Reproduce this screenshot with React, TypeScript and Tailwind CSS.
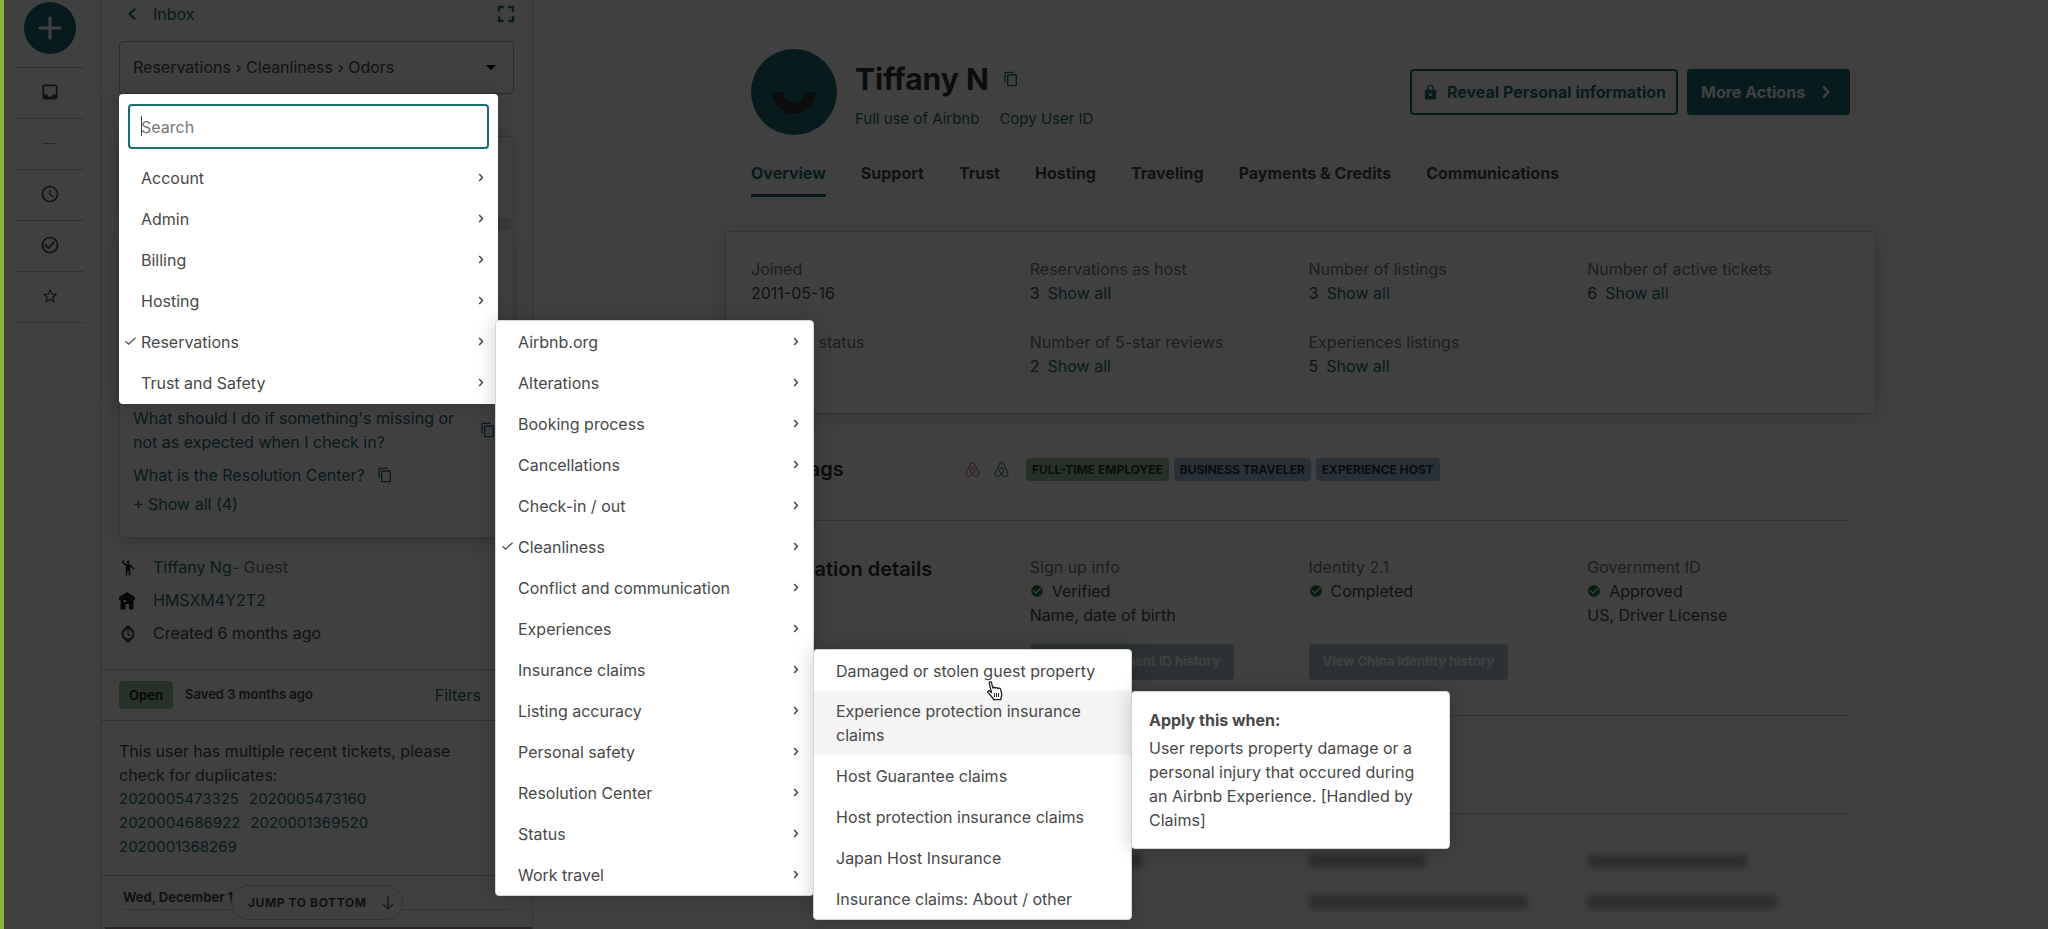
import type { ReactNode } from 'react';
import { FaAirbnb } from 'react-icons/fa';
import {
  MdAccessTime,
  MdArrowDropDown,
  MdCheckCircle,
  MdCheckCircleOutline,
  MdContentCopy,
  MdEmojiPeople,
  MdFullscreen,
  MdInbox,
  MdLock,
  MdStarBorder,
} from 'react-icons/md';

const ISSUE_AREAS = ['Account', 'Admin', 'Billing', 'Hosting', 'Reservations', 'Trust and Safety'];

const RESERVATION_ISSUES = [
  'Airbnb.org',
  'Alterations',
  'Booking process',
  'Cancellations',
  'Check-in / out',
  'Cleanliness',
  'Conflict and communication',
  'Experiences',
  'Insurance claims',
  'Listing accuracy',
  'Personal safety',
  'Resolution Center',
  'Status',
  'Work travel',
];

const INSURANCE_ISSUES = [
  'Damaged or stolen guest property',
  'Experience protection insurance claims',
  'Host Guarantee claims',
  'Host protection insurance claims',
  'Japan Host Insurance',
  'Insurance claims: About / other',
];

const TABS = ['Overview', 'Support', 'Trust', 'Hosting', 'Traveling', 'Payments & Credits', 'Communications'];

const STATS = [
  { label: 'Joined', value: '2011-05-16' },
  { label: 'Reservations as host', value: '3', link: true },
  { label: 'Number of listings', value: '3', link: true },
  { label: 'Number of active tickets', value: '6', link: true },
  { label: 'Account status', value: 'Active' },
  { label: 'Number of 5-star reviews', value: '2', link: true },
  { label: 'Experiences listings', value: '5', link: true },
];

const DUPLICATES = [
  ['2020005473325', '2020005473160'],
  ['2020004686922', '2020001369520'],
  ['2020001368269'],
];

function Chevron({ className }: { className: string }) {
  return (
    <svg className={className} viewBox="0 0 6 10" fill="none" stroke="currentColor" strokeWidth="1.7" aria-hidden="true">
      <path d="M1 1l3.6 4L1 9" />
    </svg>
  );
}

function CheckMark() {
  return (
    <svg className="absolute top-4 left-1.5 w-[11px] h-2" viewBox="0 0 11 8" fill="none" stroke="currentColor" strokeWidth="1.2" aria-hidden="true">
      <path d="M0.5 4.2l3 3L10.5 0.7" />
    </svg>
  );
}

function HouseIcon() {
  return (
    <svg className="w-4 h-[18px]" viewBox="0 0 16 18" fill="currentColor" aria-hidden="true">
      <path fillRule="evenodd" d="M8 0l8 5v3h-1.5v9.5H10V12H6.5v5.5h-5V8H0V5l4-2.5zM4.5 8v2H7V8z" />
    </svg>
  );
}

function WatchIcon() {
  return (
    <svg className="w-[18px] h-[18px]" viewBox="0 0 18 18" fill="none" stroke="currentColor" aria-hidden="true">
      <circle cx="9" cy="9" r="5.5" strokeWidth="2.2" />
      <path d="M9 5.8V9.3l2.2 1.6" strokeWidth="1.3" />
      <path d="M6.5 3.5L7.5 1h3l1 2.5zM6.5 14.500l1 2.500h3l1-2.500z" fill="currentColor" strokeWidth="0.8" />
    </svg>
  );
}

function HandPointer() {
  return (
    <svg className="absolute top-[31px] left-[172px] w-[18px] h-5 z-10" viewBox="0 0 18 20" fill="#fff" stroke="#222" strokeWidth="1.3" strokeLinejoin="round" aria-hidden="true">
      <path d="M5.5 11.5L3.3 2.6c-.5-2 1.7-2.5 2.2-.7L6.9 7.2c.3-1.3 2.2-1.3 2.6.2.4-1.2 2.2-1.1 2.6.4.5-1.1 2.2-.8 2.5.6l1 4.3c.4 2-.6 3.2-.8 5.9H7.600c-.4-2-3.500-4.400-5.500-6.900-.9-1.300.6-2.600 1.800-1.500z" />
      <path d="M8.4 12v4M10.5 12v4M12.6 12v4" strokeWidth="1" />
    </svg>
  );
}

interface MenuItemProps {
  label: string;
  checked?: boolean;
  hovered?: boolean;
  hasChildren?: boolean;
  children?: ReactNode;
}

function MenuItem({ label, checked, hovered, hasChildren, children }: MenuItemProps) {
  return (
    <li className="relative">
      <button
        type="button"
        className={`w-full min-h-[41px] flex items-center justify-between text-left pl-[22px] pr-3.5 ${hovered ? 'bg-[#f5f5f5] py-2' : ''}`}
      >
        {checked && <CheckMark />}
        <span>{label}</span>
        {hasChildren && <Chevron className="w-1.5 h-[9px]" />}
      </button>
      {children}
    </li>
  );
}

function InsuranceMenu() {
  return (
    <ul className="absolute top-0 left-full w-[319px] bg-white rounded border border-gray-300 shadow-[0_0_20px_rgba(0,0,0,0.2)]">
      {INSURANCE_ISSUES.map((label, i) => (
        <MenuItem key={label} label={label} hovered={i === 1}>
          {i === 0 && <HandPointer />}
          {i === 1 && (
            <div className="absolute top-0 left-full w-[319px] bg-white rounded border border-gray-300 px-[17px] pt-4 pb-4 shadow-[0_0_20px_rgba(0,0,0,0.2)]">
              <h3 className="font-bold leading-6 mb-1">Apply this when:</h3>
              <p className="leading-6">
                User reports property damage or a personal injury that occured during an Airbnb Experience. [Handled by Claims]
              </p>
            </div>
          )}
        </MenuItem>
      ))}
    </ul>
  );
}

function IssuePicker() {
  return (
    <div className="absolute top-full left-0 z-20 w-[379px] pb-px bg-white rounded text-[#484848] shadow-[0_0_20px_rgba(0,0,0,0.2)]">
      <div className="relative px-[9px] pt-2.5 pb-2">
        <input
          type="text"
          aria-label="Search issues"
          placeholder="Search"
          className="w-full h-[45px] rounded border-2 border-[#1c6c70] px-[11px] placeholder:text-[#767676] outline-none"
        />
        {/* text caret */}
        <span className="absolute top-[22px] left-[22px] w-px h-5 bg-gray-700" />
      </div>
      <ul>
        {ISSUE_AREAS.map(area => (
          <MenuItem key={area} label={area} checked={area === 'Reservations'} hasChildren>
            {area === 'Reservations' && (
              <ul className="absolute -top-px left-full -ml-[3px] w-[319px] bg-white rounded border border-gray-300 shadow-[0_0_20px_rgba(0,0,0,0.2)]">
                {RESERVATION_ISSUES.map(issue => (
                  <MenuItem key={issue} label={issue} checked={issue === 'Cleanliness'} hasChildren>
                    {issue === 'Insurance claims' && <InsuranceMenu />}
                  </MenuItem>
                ))}
              </ul>
            )}
          </MenuItem>
        ))}
      </ul>
    </div>
  );
}

function Rail() {
  const cell = 'w-[68px] h-[51px] pb-0.5 border-t border-[#c8c8c8] flex items-center justify-center';
  return (
    <nav className="w-[100px] shrink-0 flex flex-col items-center pt-0.5 text-[#484848]">
      <button type="button" aria-label="New ticket" className="w-[52px] h-[52px] mb-[13px] rounded-full bg-[#1c6c70] text-white flex items-center justify-center">
        <svg className="w-6 h-6" viewBox="0 0 24 24" stroke="currentColor" strokeWidth="3.2" strokeLinecap="round" aria-hidden="true">
          <path d="M12 2v20M2 12h20" />
        </svg>
      </button>
      <button type="button" aria-label="Inbox" className={cell}><MdInbox size={20} /></button>
      <div className={cell}><span className="w-3.5 h-px bg-[#999]" /></div>
      <button type="button" aria-label="Recent" className={cell}><MdAccessTime size={20} /></button>
      <button type="button" aria-label="Done" className={cell}><MdCheckCircleOutline size={20} /></button>
      <button type="button" aria-label="Starred" className={cell}><MdStarBorder size={18} /></button>
      <div className="w-[68px] border-t border-[#c8c8c8]" />
    </nav>
  );
}

function TicketPanel() {
  return (
    <section className="w-[433px] shrink-0 border-x border-[#d0d0d0] flex flex-col text-[#484848]">
      <div className="px-[18px]">
        <div className="h-[41px] pb-[14px] flex items-center justify-between text-[#1c6c70]">
          <a href="#inbox" className="flex items-center">
            <svg className="w-2.5 h-3 ml-2 mr-4" viewBox="0 0 10 12" fill="none" stroke="currentColor" strokeWidth="2.2" aria-hidden="true">
              <path d="M8 0.8L2.5 6L8 11.2" />
            </svg>
            Inbox
          </a>
          <button type="button" aria-label="Expand" className="-mr-1.5"><MdFullscreen size={28} /></button>
        </div>

        <div className="relative mb-[42px]">
          <button type="button" className="w-full h-[53px] pb-0.5 rounded border border-[#b0b0b0] pl-[13px] pr-2.5 flex items-center justify-between">
            Reservations › Cleanliness › Odors
            <MdArrowDropDown size={24} className="text-black" />
          </button>
          <IssuePicker />
        </div>

        <div className="h-[84px] mb-2 rounded border border-[#d0d0d0] shadow-[0_2px_16px_rgba(0,0,0,0.15)]" />

        <div className="h-[310px] rounded border border-[#d0d0d0] px-[13px] pb-[21px] flex flex-col justify-end text-[#1c6c70] leading-6 shadow-[0_4px_20px_rgba(0,0,0,0.2)]">
          <div className="flex items-center justify-between mb-[9px]">
            <a href="#missing" className="w-[335px]">What should I do if something's missing or not as expected when I check in?</a>
            <button type="button" aria-label="Copy link" className="mr-1"><MdContentCopy size={16} /></button>
          </div>
          <div className="flex items-center gap-3 mb-[5px]">
            <a href="#resolution">What is the Resolution Center?</a>
            <button type="button" aria-label="Copy link"><MdContentCopy size={16} /></button>
          </div>
          <a href="#all">+ Show all (4)</a>
        </div>

        <ul className="pt-[13px] pb-[19px] leading-[33px]">
          <li className="flex items-center gap-4">
            <MdEmojiPeople size={18} className="text-[#222]" />
            <span><a href="#guest" className="text-[#1c6c70]">Tiffany Ng</a><span className="text-[#767676]">- Guest</span></span>
          </li>
          <li className="flex items-center gap-4 text-[#222]">
            <span className="w-[18px] flex"><HouseIcon /></span>
            <a href="#reservation" className="text-[#1c6c70]">HMSXM4Y2T2</a>
          </li>
          <li className="flex items-center gap-4">
            <WatchIcon />
            Created 6 months ago
          </li>
        </ul>
      </div>

      <div className="h-[51px] shrink-0 border-t border-[#c8c8c8] pl-[18px] pr-[51px] flex items-center">
        <span className="h-7 px-2.5 rounded bg-[#98c8a0] text-[#222] text-[13px] leading-7 font-bold mr-3">Open</span>
        <span className="text-[13px] font-semibold">Saved 3 months ago</span>
        <a href="#filters" className="ml-auto text-[#1c6c70]">Filters</a>
      </div>

      <div className="border-y border-[#c8c8c8] pl-[18px] pr-16 pt-[18px] pb-4 leading-6">
        <p>This user has multiple recent tickets, please check for duplicates:</p>
        {DUPLICATES.map(row => (
          <p key={row[0]} className="flex gap-2.5 text-[15px] leading-6 text-[#1c6c70]">
            {row.map(id => <a key={id} href={`#${id}`}>{id}</a>)}
          </p>
        ))}
      </div>

      <div className="relative mx-[22px] pt-2.5 pb-[17px]">
        <h4 className="border-b border-[#c8c8c8] pb-px text-[13px] leading-[22px] font-bold">Wed, December 16</h4>
        <button type="button" className="absolute top-[9px] left-[108px] h-[35px] w-[172px] rounded-full border border-[#c8c8c8] bg-white pl-4 pr-2 flex items-center justify-between text-xs font-bold tracking-wider">
          JUMP TO BOTTOM
          <svg className="w-3 h-3.5 text-[#767676]" viewBox="0 0 12 14" fill="none" stroke="currentColor" strokeWidth="1.5" aria-hidden="true">
            <path d="M6 0v13M1 8l5 5 5-5" />
          </svg>
        </button>
      </div>
      <div className="ml-1 border-t-2 border-[#a09090]" />
    </section>
  );
}

function Status({ label, status, detail }: { label: string; status: string; detail?: string }) {
  return (
    <div className="leading-6">
      <p className="text-[#767676]">{label}</p>
      <p className="flex items-center gap-2">
        <MdCheckCircle size={14} className="text-[#1f7a3a]" />
        {status}
      </p>
      <p className="h-6">{detail}</p>
    </div>
  );
}

function Profile() {
  const historyButton = 'mt-[17px] justify-self-start h-9 px-3.5 rounded bg-[#b0c8d0] text-white text-[13px] font-bold';
  const redacted = 'h-3.5 bg-[#b4b4b4] blur-[3px]';
  return (
    <main className="flex-1 min-w-0 pl-48 pr-[172px] pt-[49px] text-[#484848]">
      <header className="px-[26px] flex items-center">
        <div className="w-[86px] h-[86px] rounded-full bg-[#1c6c70] mr-[18px]">
          <svg viewBox="0 0 86 86" fill="none" stroke="#333" strokeWidth="11" aria-hidden="true">
            <path d="M27 43a16 16.5 0 0 0 32 0" />
          </svg>
        </div>
        <div>
          <div className="flex items-center gap-3.5 pt-1.5">
            <h1 className="text-3xl leading-10 font-bold text-[#333]">Tiffany N</h1>
            <button type="button" aria-label="Copy name" className="text-[#1c6c70]"><MdContentCopy size={16} /></button>
          </div>
          <div className="flex gap-5 text-[15px] leading-6 pt-2 text-[#1c6c70]">
            <a href="#use">Full use of Airbnb</a>
            <a href="#copy">Copy User ID</a>
          </div>
        </div>
        <div className="ml-auto flex gap-[9px] font-bold">
          <button type="button" className="h-[46px] w-[268px] rounded border-2 border-[#1c6c70] text-[#1c6c70] flex items-center justify-center gap-2">
            <MdLock size={17} />
            Reveal Personal information
          </button>
          <button type="button" className="h-[46px] w-[163px] rounded bg-[#1c6c70] text-white pl-3.5 flex items-center gap-4">
            More Actions
            <Chevron className="w-2.5 h-3.5" />
          </button>
        </div>
      </header>

      <nav className="px-[26px] mt-[26px] mb-[34px] flex gap-[35px] font-bold">
        {TABS.map((tab, i) => (
          <a
            key={tab}
            href={`#${tab}`}
            className={i === 0 ? 'h-9 leading-6 border-b-[3px] border-[#1c6c70] text-[#1c6c70]' : 'h-9 leading-6'}
          >
            {tab}
          </a>
        ))}
      </nav>

      <div className="h-[183px] rounded border border-[#d0d0d0] px-[25px] pt-[25px] shadow-[0_2px_20px_rgba(0,0,0,0.18)]">
        <dl className="grid grid-cols-4 gap-x-4 gap-y-[25px] leading-6">
          {STATS.map(stat => (
            <div key={stat.label}>
              <dt className="text-[#767676]">{stat.label}</dt>
              <dd className="flex gap-2">
                {stat.value}
                {stat.link && <a href="#all" className="text-[#1c6c70]">Show all</a>}
              </dd>
            </div>
          ))}
        </dl>
      </div>

      <div className="px-[26px]">
        <section className="h-[107px] border-b border-[#c8c8c8] pt-1 flex items-center">
          <h2 className="w-[213px] text-xl leading-7 font-semibold text-[#333]">User tags</h2>
          <div className="w-[62px] flex gap-3">
            <FaAirbnb size={17} className="text-[#d9635f]" />
            <FaAirbnb size={17} className="text-[#1c6c70]" />
          </div>
          <div className="flex gap-[5px] text-xs leading-[23px] font-bold text-[#333]">
            <span className="px-1.5 rounded bg-[#98c8a0]">FULL-TIME EMPLOYEE</span>
            <span className="px-1.5 rounded bg-[#9cc4dc]">BUSINESS TRAVELER</span>
            <span className="px-1.5 rounded bg-[#9cc4dc]">EXPERIENCE HOST</span>
          </div>
        </section>

        <section className="h-[195px] border-b border-[#c8c8c8] pt-[34px] grid grid-cols-4 gap-x-4 content-start">
          <h2 className="row-span-2 text-xl leading-7 font-semibold text-[#333]">Verification details</h2>
          <Status label="Sign up info" status="Verified" detail="Name, date of birth" />
          <Status label="Identity 2.1" status="Completed" />
          <Status label="Government ID" status="Approved" detail="US, Driver License" />
          <button type="button" className={historyButton}>View government ID history</button>
          <button type="button" className={historyButton}>View China identity history</button>
        </section>

        <section className="h-[98px] border-b border-[#c8c8c8]" />

        <section className="pt-10 grid grid-cols-4 gap-x-4 gap-y-[27px]">
          <div className={`${redacted} col-start-2 w-28`} />
          <div className={`${redacted} w-[117px]`} />
          <div className={`${redacted} w-40`} />
          <div className={`${redacted} col-start-2 w-24`} />
          <div className={`${redacted} w-[219px]`} />
          <div className={`${redacted} w-[190px]`} />
        </section>
      </div>
    </main>
  );
}

export default function App() {
  return (
    <div className="relative h-screen overflow-hidden flex bg-white font-['Inter',sans-serif] text-base">
      <Rail />
      <TicketPanel />
      <Profile />
      {/* page dimmer, the issue picker sits above it */}
      <div className="absolute inset-0 z-10 bg-black/75 pointer-events-none" />
      <div className="absolute inset-y-0 left-0 z-20 w-1 bg-[#8db53c]" />
    </div>
  );
}
